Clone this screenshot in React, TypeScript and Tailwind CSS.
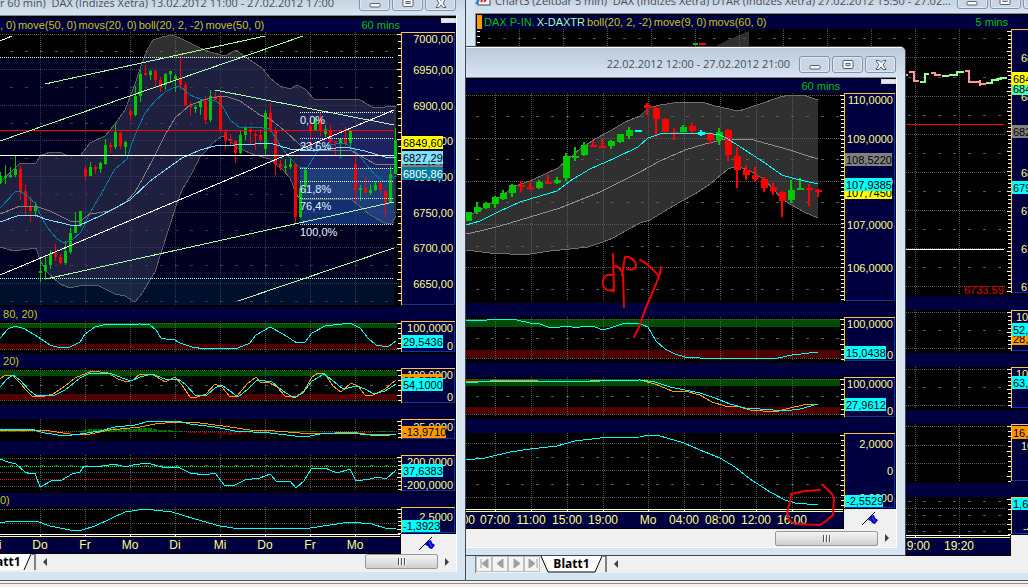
import React from 'react';

type Candle = [x: number, high: number, low: number, top: number, bottom: number, color: 'g' | 'r' | 'c'];

const DAX_CANDLES: Candle[] = [
  [0, 172, 184, 176, 183, 'g'], [5, 165, 184, 176, 178, 'g'], [10, 167, 178, 175, 177, 'g'], [15, 155, 177, 169, 175, 'g'],
  [20, 165, 200, 169, 192, 'r'], [25, 185, 215, 191, 206, 'r'], [30, 196, 222, 206, 211, 'r'], [35, 202, 217, 206, 211, 'g'],
  [40, 258, 282, 271, 273, 'g'], [45, 255, 280, 265, 271, 'g'], [50, 250, 269, 255, 265, 'g'], [55, 244, 261, 253, 257, 'r'],
  [60, 254, 265, 257, 263, 'r'], [65, 241, 265, 251, 263, 'g'], [70, 228, 254, 233, 252, 'g'], [75, 212, 233, 225, 233, 'g'],
  [80, 211, 227, 211, 226, 'g'], [85, 166, 180, 169, 176, 'r'], [90, 162, 176, 167, 176, 'g'], [95, 165, 174, 167, 169, 'r'],
  [100, 162, 173, 163, 169, 'g'], [105, 139, 165, 145, 164, 'g'], [110, 142, 153, 145, 147, 'r'], [115, 124, 149, 132, 147, 'g'],
  [120, 132, 149, 133, 146, 'r'], [125, 141, 155, 142, 147, 'g'], [130, 109, 121, 111, 115, 'r'], [135, 86, 116, 96, 115, 'g'],
  [140, 70, 102, 74, 96, 'g'], [145, 65, 76, 73, 75, 'r'], [150, 70, 80, 71, 75, 'g'], [155, 70, 87, 71, 80, 'r'],
  [160, 77, 92, 80, 87, 'r'], [165, 73, 90, 74, 85, 'g'], [170, 71, 83, 71, 74, 'g'], [175, 74, 92, 76, 79, 'g'],
  [180, 56, 90, 78, 85, 'r'], [185, 82, 106, 85, 105, 'r'], [190, 102, 116, 105, 107, 'r'], [195, 105, 113, 107, 109, 'g'],
  [200, 99, 115, 101, 107, 'g'], [205, 96, 124, 101, 120, 'r'], [210, 90, 122, 96, 120, 'g'], [215, 92, 100, 96, 100, 'r'],
  [220, 95, 132, 96, 131, 'r'], [225, 129, 149, 132, 140, 'r'], [230, 134, 145, 139, 141, 'r'], [235, 141, 163, 141, 153, 'r'],
  [240, 131, 154, 135, 153, 'g'], [245, 126, 140, 128, 135, 'g'], [250, 126, 145, 129, 132, 'r'], [255, 131, 150, 134, 136, 'r'],
  [260, 129, 145, 135, 140, 'r'], [265, 110, 156, 113, 149, 'g'], [270, 103, 133, 113, 130, 'r'], [275, 127, 175, 131, 164, 'r'],
  [280, 160, 170, 164, 167, 'r'], [285, 159, 173, 166, 168, 'g'], [290, 159, 169, 164, 167, 'g'], [295, 163, 223, 164, 217, 'r'],
  [300, 181, 218, 188, 217, 'g'], [305, 168, 194, 170, 186, 'g'], [310, 122, 144, 126, 130, 'r'], [315, 117, 131, 119, 130, 'g'],
  [320, 112, 136, 119, 130, 'r'], [325, 125, 137, 129, 134, 'g'], [330, 125, 145, 130, 142, 'r'], [335, 141, 155, 141, 143, 'r'],
  [340, 138, 158, 139, 144, 'g'], [345, 127, 146, 139, 143, 'r'], [350, 130, 146, 131, 143, 'g'], [355, 150, 202, 164, 190, 'r'],
  [360, 185, 201, 188, 190, 'g'], [365, 177, 193, 188, 193, 'r'], [370, 184, 195, 190, 193, 'g'], [375, 181, 191, 185, 190, 'g'],
  [380, 182, 195, 183, 190, 'r'], [385, 190, 217, 191, 202, 'r'], [390, 166, 202, 174, 202, 'g'], [395, 128, 174, 141, 174, 'g'],
];

const FX_CANDLES: Candle[] = [
  [468, 212, 221, 212, 221, 'g'], [477, 202, 214, 207, 212, 'g'], [486, 202, 209, 203, 208, 'g'], [495, 196, 208, 197, 204, 'g'],
  [503, 190, 200, 193, 199, 'g'], [512, 184, 197, 185, 193, 'g'], [521, 181, 192, 185, 187, 'r'], [530, 181, 190, 187, 189, 'r'],
  [539, 180, 189, 182, 188, 'g'], [548, 175, 184, 182, 184, 'r'], [557, 177, 184, 180, 183, 'g'], [566, 153, 181, 156, 178, 'g'],
  [575, 147, 161, 156, 158, 'g'], [584, 142, 156, 145, 155, 'g'], [593, 141, 147, 145, 147, 'r'], [602, 139, 148, 146, 148, 'r'],
  [611, 140, 149, 141, 146, 'g'], [620, 134, 143, 134, 142, 'g'], [629, 127, 139, 130, 136, 'g'], [638, 130, 132, 130, 132, 'c'],
  [647, 103, 115, 105, 108, 'r'], [656, 107, 137, 108, 119, 'r'], [665, 118, 133, 119, 132, 'r'], [674, 128, 140, 132, 134, 'r'],
  [683, 125, 132, 127, 132, 'g'], [692, 123, 133, 126, 131, 'r'], [701, 130, 136, 132, 135, 'c'], [710, 132, 144, 134, 140, 'r'],
  [719, 128, 145, 132, 140, 'g'], [728, 129, 161, 130, 155, 'r'], [737, 147, 188, 156, 170, 'r'], [746, 165, 180, 170, 175, 'r'],
  [755, 167, 182, 175, 179, 'r'], [764, 177, 192, 179, 188, 'r'], [773, 183, 195, 187, 191, 'r'], [782, 191, 217, 192, 201, 'r'],
  [791, 180, 203, 190, 200, 'g'], [800, 178, 190, 188, 190, 'g'], [809, 184, 206, 188, 190, 'r'], [818, 189, 197, 190, 192, 'r'],
];

const CANDLE_COLORS = { g: '#00c800', r: '#ff0000', c: '#00ffff' };
const CYAN = '#00ffff';
const ORANGE = '#ff9900';

const DAX_X = [40, 85, 130, 175, 220, 265, 310, 355];
const FX_X = [495, 531, 567, 603, 648, 684, 720, 756, 792];
const FIVE_X = [519, 563, 607, 651, 695, 739, 783, 827, 871, 915, 959];

const HISTOGRAM = [
  1, 1, 1, 1, 1, 1, 0, 0, -1, -1, -2, -1, -1, -1, -1, 0, 1, 2, 3, 3, 3, 3, 3, 4, 3, 3, 3, 3, 4, 4, 4, 3, 2, 2, 2, 1, 1,
  0, -1, -1, -1, -2, -1, -1, -2, -2, -3, -2, -2, -1, -1, -1, -1, -1, -1, -1, 1, 1, 1, 1, 1, 1, 1, 1, 0, -1, -1, -2, -1, -1, -1,
  -2, -1, -1, -1, 0, 1, 1, 1,
];

interface ChartProps {
  x: number;
  y: number;
  w: number;
  h: number;
  label: string;
  children: React.ReactNode;
}

const Chart: React.FC<ChartProps> = ({ x, y, w, h, label, children }) => (
  <svg role="img" aria-label={label} viewBox={`${x} ${y} ${w} ${h}`} width={w} height={h} shapeRendering="crispEdges" className="block shrink-0 bg-black">
    {children}
  </svg>
);

interface GridProps {
  xs: number[];
  rows: number[];
  dashes?: number[];
  x0: number;
  x1: number;
  y0: number;
  y1: number;
}

const Grid: React.FC<GridProps> = ({ xs, rows, dashes = [], x0, x1, y0, y1 }) => (
  <g stroke="#585858">
    {xs.map((x) => <line key={x} x1={x + 0.5} x2={x + 0.5} y1={y0} y2={y1} strokeDasharray="1 1" />)}
    {rows.map((y) => <line key={y} x1={x0} x2={x1} y1={y + 0.5} y2={y + 0.5} strokeDasharray="1 1" />)}
    {dashes.map((y) => <line key={y} x1={x0 + 10} x2={x1} y1={y + 0.5} y2={y + 0.5} strokeDasharray="3 12" />)}
  </g>
);

const Line: React.FC<{ points: string; color: string }> = ({ points, color }) => (
  <polyline points={points} fill="none" stroke={color} strokeWidth="1" />
);

const Candles: React.FC<{ data: Candle[]; body: number; wick: number }> = ({ data, body, wick }) => (
  <g>
    {data.map(([x, high, low, top, bottom, c]) => (
      <g key={x} fill={CANDLE_COLORS[c]}>
        <rect x={x - (wick > 1 ? 1 : 0)} y={high} width={wick} height={low - high} />
        <rect x={x - (body - 1) / 2} y={top} width={body} height={bottom - top} />
      </g>
    ))}
  </g>
);

interface AxisProps {
  x: number;
  y: number;
  w: number;
  h: number;
  step?: number;
  labels: [number, string][];
  anchor?: number;
}

const Axis: React.FC<AxisProps> = ({ x, y, w, h, step = 7, labels, anchor }) => {
  const ticks = Array.from({ length: Math.floor((h - 2) / step) + 1 }, (_, i) => y + 2 + i * step);
  return (
    <g>
      {ticks.map((t, i) => <rect key={t} x={x - (i % 5 === 0 ? 4 : 3)} y={t} width={i % 5 === 0 ? 4 : 3} height="1" fill="#fff" />)}
      <rect x={x} y={y} width={w} height={h} fill="#000040" />
      <rect x={x + w - 1} y={y} width="1" height={h} fill="#0030d8" />
      <rect x={x} y={y + h - 1} width={w} height="1" fill="#0030d8" />
      <rect x={x} y={y} width={w} height="1" fill="#ffc830" />
      <rect x={x} y={y} width="1" height={h} fill="#ffc830" />
      {labels.map(([ly, text]) => (
        <text key={ly} x={anchor ?? x + w - 2} y={ly} textAnchor={anchor ? 'start' : 'end'} fill="#ffff80" fontSize="11">{text}</text>
      ))}
    </g>
  );
};

interface TagProps {
  x: number;
  y: number;
  w: number;
  h?: number;
  bg: string;
  fg?: string;
  text: string;
}

const Tag: React.FC<TagProps> = ({ x, y, w, h = 13, bg, fg = '#000', text }) => (
  <g>
    <rect x={x} y={y} width={w} height={h} fill={bg} />
    <text x={x + 1} y={y + h - 2} fill={fg} fontSize="11">{text}</text>
  </g>
);

// overbought / oversold stripes behind the stochastic lines
const Zones: React.FC<{ x: number; w: number; top: [number, number]; bottom: [number, number] }> = ({ x, w, top, bottom }) => (
  <g>
    <rect x={x} y={top[0]} width={w} height={top[1]} fill="#004c00" />
    <rect x={x} y={bottom[0]} width={w} height={bottom[1]} fill="#500000" />
  </g>
);

const TimeAxis: React.FC<{ x: number; y: number; w: number; h: number; end: number; xs: number[]; labels: [number, string][] }> = ({ x, y, w, h, end, xs, labels }) => (
  <Chart x={x} y={y} w={w} h={h} label="Zeitachse">
    <rect x={x} y={y + 3} width={end - x} height={h - 4} fill="#000040" />
    <rect x={x} y={y} width={end - x} height="1" fill="#fff" />
    <rect x={x} y={y + 2} width={end - x} height="1" fill="#ffff80" />
    {xs.map((t) => <rect key={t} x={t} y={y + 1} width="1" height="2" fill="#fff" />)}
    {labels.map(([lx, text]) => (
      <text key={lx} x={lx} y={y + 15} textAnchor="middle" fill="#ffff80" fontSize="12">{text}</text>
    ))}
    <rect x={end + 1} y={y} width={x + w - end} height={h} fill="#f0f0f0" />
    <g shapeRendering="auto" transform={`translate(${end + 19} ${y + 3})`}>
      <path d="M0 13 13 0" stroke="#000" fill="none" />
      <path d="M9 4 12 3 13 6 16 8 13 12 10 11 9 9 6 8z" fill="#0000c0" />
      <path d="M10 5l3 5" stroke="#4060ff" />
    </g>
  </Chart>
);

const Header: React.FC<{ children?: React.ReactNode }> = ({ children }) => (
  <div className="flex h-[14px] shrink-0 items-center justify-between overflow-hidden whitespace-pre bg-[#000040] text-[11px] leading-[14px] text-[#c8c800]">
    {children}
  </div>
);

const Grip: React.FC = () => <span className="h-[5px] w-[15px] self-start border border-gray-300 bg-gray-200" />;

const WindowButtons: React.FC = () => (
  <div className="flex shrink-0 gap-[2px]">
    {['Minimieren', 'Maximieren', 'Schließen'].map((name) => (
      <button key={name} aria-label={name} className="flex h-[17px] w-[31px] items-center justify-center rounded-[3px] border border-[#8494a8] bg-[#c9d6e5] shadow-[inset_0_0_0_1px_#e0e9f3]">
        <svg width="14" height="12" viewBox="0 0 14 12" fill="#fff" stroke="#59616c">
          {name === 'Minimieren' && <rect x="2" y="6.5" width="10" height="3.5" rx="1" />}
          {name === 'Maximieren' && (
            <>
              <rect x="2" y="1.5" width="10" height="8" rx="1" />
              <rect x="5" y="4.5" width="4" height="2" fill="#c9d6e5" />
            </>
          )}
          {name === 'Schließen' && <path d="M2 1.500h3l2 2 2-2h3L9 6l3 4.500H9l-2-2.500-2 2.500H2L5 6z" />}
        </svg>
      </button>
    ))}
  </div>
);

const ScrollThumb: React.FC<{ className: string }> = ({ className }) => (
  <div className={`flex h-[15px] shrink-0 items-center justify-center gap-px rounded-[2px] border border-[#989898] bg-linear-to-b from-[#f4f4f4] to-[#cfcfcf] ${className}`}>
    {[0, 1, 2].map((i) => <span key={i} className="h-[7px] w-[2px] border-l border-[#505050] bg-white" />)}
  </div>
);

const ArrowButton: React.FC<{ dir: 'left' | 'right' }> = ({ dir }) => (
  <button aria-label={dir === 'left' ? 'Zurück' : 'Weiter'} className="flex h-[16px] w-[18px] shrink-0 items-center justify-center">
    <svg width="4" height="8" viewBox="0 0 4 8" fill="#404040">
      <path d={dir === 'left' ? 'M4 0v8L0 4z' : 'M0 0v8l4-4z'} />
    </svg>
  </button>
);

const Splitter: React.FC = () => <span className="h-[16px] w-[4px] border-r-2 border-t border-[#808080] bg-[#f0f0f0]" />;

const DaxWindow: React.FC = () => {
  const bandTop = '0,182 15,168 20,163 36,163 40,156 50,152 60,152 66,155 81,155 90,143 105,136 115,124 125,110 135,84 141,66 147,50 153,40 162,37 172,35 180,38 190,43 200,48 210,52 225,56 236,50 250,60 262,68 270,78 280,86 290,89 297,85 305,89 315,100 335,99 360,100 372,107 385,107 396,106';
  const bandBottom = '396,216 392,223 387,224 370,215 352,200 300,199 296,194 290,178 283,170 270,159 255,155 245,151 236,147 227,138 222,136 213,143 205,152 200,157 192,173 182,190 177,203 162,250 155,272 143,292 135,302 125,296 115,294 97,285 83,285 70,288 60,284 47,272 40,260 36,248 14,251 0,247';
  return (
    <section className="relative z-20 flex w-[466px] shrink-0 flex-col border-r border-[#404850] bg-[#d7e4f1]">
      <header className="flex h-[15px] shrink-0 items-end justify-between overflow-hidden bg-linear-to-b from-[#c6d3e1] to-[#d7e4f1] pr-[9px]">
        <h2 className="mb-[4px] whitespace-pre font-['Open_Sans',sans-serif] text-[11px] leading-[16px] text-[#484f58]">r 60 min)  DAX (Indizes Xetra) 13.02.2012 11:00 - 27.02.2012 17:00</h2>
        <div className="mb-[4px]"><WindowButtons /></div>
      </header>
      <div className="mr-[8px] flex flex-col border-r border-white bg-black">
        <div className="h-[3px] border-t border-[#808890] bg-black" />
        <Header>
          <span className="flex gap-[2px]">
            <span>, 0)</span>
            <span>move(50, 0)</span>
            <span>movs(20, 0)</span>
            <span>boll(20, 2, -2)</span>
            <span>move(50, 0)</span>
          </span>
          <span className="ml-auto mr-[41px] text-[#00c000]">60 mins</span>
          <span className="flex h-full"><Grip /></span>
        </Header>
        <Chart x={0} y={32} w={456} h={275} label="DAX 60 min">
          <polygon points={`${bandTop} ${bandBottom}`} fill="#303030" />
          <Grid xs={DAX_X} rows={[34, 69, 105, 140, 176, 212, 247, 283]} dashes={[51, 87, 123, 158, 194, 230, 265, 301]} x0={0} x1={400} y0={32} y1={305} />
          <rect x="0" y="58" width="394" height="247" fill="#00005c" opacity="0.35" />
          <rect x="0" y="278" width="394" height="27" fill="#003c50" opacity="0.25" />
          <rect x="300" y="112" width="94" height="27" fill="#3030a0" opacity="0.2" />
          <rect x="300" y="139" width="94" height="29" fill="#2028a0" opacity="0.35" />
          <rect x="300" y="168" width="94" height="30" fill="#2050a0" opacity="0.6" />
          <rect x="300" y="198" width="94" height="26" fill="#2058b0" opacity="0.55" />
          <Line points={bandTop} color="#606060" />
          <Line points={bandBottom} color="#606060" />
          <Candles data={DAX_CANDLES} body={3} wick={1} />
          <Line points="0,208 15,192 20,191 27,196 36,204 41,216 47,227 57,239 64,243 72,240 81,232 90,213 105,187 115,169 127,159 130,149 135,135 145,113 155,101 165,92 175,87 180,86 190,95 200,99 215,101 222,105 230,120 240,128 255,127 270,129 280,145 290,158 300,168 308,167 318,150 328,145 345,143 352,148 362,159 375,175 385,182 396,176" color="#007ca0" />
          <Line points="0,214 20,206 35,206 50,211 70,221 80,221 90,214 110,211 125,203 135,192 143,178 155,155 165,135 175,118 190,105 210,98 225,96 240,101 260,115 270,119 285,131 300,145 320,151 350,150 375,164 396,164" color="#808080" />
          <Line points="0,222 20,215 35,215 45,219 70,225 80,225 100,216 130,200 150,181 175,163 182,158 200,150 215,146 235,145 255,144 270,143 290,149 310,151 345,147 365,151 385,157 396,158" color="#80e0ff" />
          <rect x="0" y="130" width="394" height="1" fill="#f00" />
          <rect x="0" y="155" width="394" height="1" fill="#fff" />
          <g stroke="#c8ffff" strokeDasharray="1 1">
            <line x1="0" x2="394" y1="57.500" y2="57.500" />
            <line x1="0" x2="394" y1="278.500" y2="278.500" />
            {[112, 138, 168, 181, 198, 224].map((y) => <line key={y} x1="300" x2="394" y1={y + 0.5} y2={y + 0.5} />)}
          </g>
          <g stroke="#a8ffa8">
            <line x1="45" y1="84" x2="265" y2="36" />
            <line x1="0" y1="141" x2="303" y2="36" />
            <line x1="215" y1="90" x2="394" y2="125" />
            <line x1="46" y1="279" x2="394" y2="202" />
            <line x1="238" y1="301" x2="394" y2="248" />
          </g>
          <g stroke="#fff">
            <line x1="0" y1="41" x2="12" y2="36" />
            <line x1="0" y1="275" x2="394" y2="110" />
          </g>
          <g fill="#e0f4ff" fontSize="11">
            <text x="300" y="124">0,0%</text>
            <text x="300" y="150">23,6%</text>
            <text x="300" y="193">61,8%</text>
            <text x="300" y="210">76,4%</text>
            <text x="300" y="236">100,0%</text>
          </g>
          <Axis x={401} y={32} w={54} h={273} labels={[[43, '7000,00'], [74, '6950,00'], [110, '6900,00'], [145, '6850,00'], [181, '6800,00'], [217, '6750,00'], [252, '6700,00'], [288, '6650,00']]} />
          <Tag x={402} y={154} w={41} bg="#808080" text="6821,34" />
          <Tag x={402} y={136} w={41} bg="#ffff00" text="6849,60" />
          <Tag x={402} y={151} w={41} bg="#80e0ff" text="6827,29" />
          <Tag x={402} y={167} w={41} bg="#007ca0" fg="#fff" text="6805,86" />
        </Chart>

        <Header> 80, 20)</Header>
        <Chart x={0} y={321} w={456} h={33} label="Stochastik 80 20">
          <Zones x={0} w={397} top={[323, 5]} bottom={[344, 5]} />
          <Grid xs={DAX_X} rows={[323, 349]} x0={0} x1={400} y0={321} y1={353} />
          <Line points="0,338 8,329 15,326 25,329 38,337 50,345 60,348 70,347 80,342 85,334 95,327 103,325 140,324 150,325 156,330 161,338 166,339 173,339 180,343 192,347 205,349 215,348 235,349 243,346 250,343 256,335 270,327 283,334 297,343 305,342 312,333 325,326 350,323 360,328 368,338 376,345 388,347 396,341" color={CYAN} />
          <Axis x={401} y={321} w={54} h={31} step={5} labels={[[332, '100,0000'], [350, '0']]} />
          <Tag x={402} y={335} w={41} bg={CYAN} text="29,5436" />
        </Chart>

        <Header> 20)</Header>
        <Chart x={0} y={368} w={456} h={37} label="Stochastik 20">
          <Zones x={0} w={397} top={[371, 5]} bottom={[394, 6]} />
          <Grid xs={DAX_X} rows={[370, 400]} dashes={[385]} x0={0} x1={400} y0={368} y1={402} />
          <Line points="0,379 5,375 12,375 20,383 27,391 32,396 45,396 53,394 65,386 75,378 92,371 108,373 118,379 127,382 133,380 140,374 152,374 165,382 175,377 182,385 190,397 197,397 206,394 215,384 222,387 230,397 237,396 247,384 256,377 260,382 268,382 277,387 285,396 296,397 304,391 312,377 318,373 325,374 333,386 341,392 351,383 358,386 365,395 373,395 385,389 396,380" color={ORANGE} />
          <Line points="0,387 7,379 13,375 20,380 30,391 37,396 55,395 65,390 80,378 90,373 110,373 122,378 131,381 140,377 152,374 160,377 167,380 178,379 185,384 196,396 207,395 215,388 222,385 230,391 238,397 248,389 257,380 272,382 283,391 294,398 303,393 312,381 324,374 332,380 343,389 357,386 365,389 374,394 385,391 396,384" color={CYAN} />
          <Axis x={401} y={368} w={54} h={35} step={5} labels={[[379, '100,0000'], [401, '0']]} />
          <Tag x={402} y={374} w={41} bg={ORANGE} text="60,0756" />
          <Tag x={402} y={378} w={41} bg={CYAN} text="54,1000" />
        </Chart>

        <Header />
        <Chart x={0} y={419} w={456} h={22} label="MACD">
          <Grid xs={DAX_X} rows={[431]} x0={0} x1={400} y0={419} y1={438} />
          {HISTOGRAM.map((v, i) => (
            <rect key={i} x={i * 5 - 2} y={v > 0 ? 432 - v : 432} width="4" height={Math.abs(v)} fill={v > 0 ? '#007800' : '#780000'} />
          ))}
          <Line points="0,431 35,430 50,431 70,434 90,434 110,430 140,427 155,424 175,422 200,423 215,425 230,427 250,430 275,431 300,433 320,434 350,432 365,434 390,435 396,434" color={ORANGE} />
          <Line points="0,430 30,429 45,433 65,436 80,434 100,431 115,427 135,425 150,421 178,421 190,424 215,427 235,431 270,433 295,436 310,436 325,433 350,433 370,435 385,436 396,434" color={CYAN} />
          <Axis x={401} y={419} w={54} h={20} step={4} labels={[[431, '25,0000']]} />
          <Tag x={402} y={426} w={44} h={12} bg={ORANGE} text="-13,9710" />
        </Chart>

        <Header />
        <Chart x={0} y={455} w={456} h={38} label="CCI">
          <Grid xs={DAX_X} rows={[458, 472, 486]} dashes={[465]} x0={0} x1={400} y0={455} y1={490} />
          <line x1="0" x2="397" y1="466.500" y2="466.500" stroke="#00ff00" strokeDasharray="1 1" />
          <line x1="0" x2="397" y1="479.500" y2="479.500" stroke="#d82020" strokeDasharray="1 1" />
          <Line points="0,459 8,462 16,464 25,472 30,474 35,473 40,487 53,480 62,480 72,474 80,472 84,466 97,467 115,464 125,467 133,465 147,463 162,467 180,468 190,473 205,475 215,473 225,486 235,485 245,480 260,478 270,474 277,482 290,481 296,488 304,481 311,469 325,468 337,473 350,469 356,481 370,479 378,477 386,479 396,470" color={CYAN} />
          <Axis x={401} y={455} w={54} h={36} step={4} labels={[[466, '200,0000'], [489, '-200,0000']]} />
          <Tag x={402} y={464} w={41} bg={CYAN} text="37,6383" />
        </Chart>

        <Header>0)</Header>
        <Chart x={0} y={507} w={456} h={27} label="Momentum">
          <Grid xs={DAX_X} rows={[509, 523]} x0={0} x1={400} y0={507} y1={533} />
          <Line points="0,523 10,521 36,521 50,526 70,530 82,530 95,526 110,519 125,512 145,509 172,512 195,519 220,526 240,529 265,528 310,528 330,525 350,522 372,524 385,528 396,528" color={CYAN} />
          <Axis x={401} y={507} w={54} h={26} step={4} labels={[[521, '2,5000']]} />
          <Tag x={402} y={520} w={38} h={12} bg={CYAN} text="-1,3923" />
        </Chart>
        <TimeAxis x={0} y={534} w={456} h={20} end={400} xs={DAX_X} labels={[[0, 'i'], [40, 'Do'], [85, 'Fr'], [130, 'Mo'], [175, 'Di'], [220, 'Mi'], [265, 'Do'], [310, 'Fr'], [355, 'Mo']]} />

        <div className="flex h-[18px] items-start bg-[#f0f0f0]">
          <div className="relative flex h-[17px] w-[32px]">
            <svg width="32" height="17" className="absolute inset-0">
              <path d="M0 0H31L24 16H0z" fill="#fff" />
              <path d="M31 0 24 16" stroke="#000" />
            </svg>
            <button className="relative -ml-[4px] h-[16px] font-['Open_Sans',sans-serif] text-[12px] font-bold leading-[16px] text-black">att1</button>
          </div>
          <Splitter />
          <ArrowButton dir="left" />
          <div className="flex-1" />
          <ScrollThumb className="w-[73px]" />
          <ArrowButton dir="right" />
        </div>
      </div>
    </section>
  );
};

const FxWindow: React.FC = () => {
  const bandTop = '466,217 480,210 493,202 515,186 530,181 545,174 558,168 567,160 580,149 595,139 610,131 625,122 640,116 648,108 660,105 680,102 702,102 715,106 738,111 745,109 760,104 780,97 790,95 803,95 818,100';
  const bandBottom = '818,218 804,212 790,204 782,199 765,180 752,172 737,166 728,169 710,184 695,194 680,202 665,211 650,220 640,223 627,230 613,238 603,242 588,247 570,249 550,251 530,254 510,254 490,253 466,250';
  return (
    <section className="absolute left-[465px] top-[46px] z-10 flex w-[441px] flex-col overflow-hidden rounded-tr-[6px] border border-[#404850] bg-[#d7e4f1]">
      <header className="flex h-[30px] items-center justify-end gap-[9px] border-t border-white bg-linear-to-b from-[#bccad9] to-[#d7e4f1] pr-[9px] pt-[4px]">
        <h2 className="whitespace-pre font-['Open_Sans',sans-serif] text-[11px] text-[#484f58]">22.02.2012 12:00 - 27.02.2012 21:00</h2>
        <WindowButtons />
      </header>
      <div className="mr-[8px] flex flex-col border-r border-white bg-black">
        <div className="h-[2px] border-t border-[#808890] bg-black" />
        <Header>
          <span className="ml-auto mr-[41px] text-[#00c000]">60 mins</span>
          <span className="flex h-full"><Grip /></span>
        </Header>
        <Chart x={466} y={93} w={430} h={210} label="60 min">
          <polygon points={`${bandTop} ${bandBottom}`} fill="#303030" />
          <Grid xs={FX_X} rows={[95, 138, 181, 224, 267]} dashes={[116, 159, 202, 246, 289]} x0={466} x1={843} y0={93} y1={300} />
          <Line points={bandTop} color="#707070" />
          <Line points={bandBottom} color="#707070" />
          <Line points="466,234 480,231 500,226 530,217 560,208 580,200 600,192 620,182 640,172 660,161 685,150 705,144 725,139 750,139 768,144 790,150 805,155 818,159" color="#909090" />
          <Candles data={FX_CANDLES} body={7} wick={2} />
          <Line points="466,225 480,221 500,211 520,202 540,196 557,191 570,181 590,169 615,158 638,147 648,138 660,134 685,133 705,133 720,135 728,139 745,150 765,163 782,175 792,178 818,184" color={CYAN} />
          <Axis x={844} y={93} w={51} h={208} step={4} labels={[[104, '110,0000'], [143, '109,0000'], [186, '108,0000'], [229, '107,0000'], [272, '106,0000']]} />
          <Tag x={845} y={153} w={47} bg="#808080" text="108,5220" />
          <Tag x={845} y={186} w={47} bg="#ffff00" text="107,7450" />
          <Tag x={845} y={178} w={47} bg={CYAN} text="107,9385" />
        </Chart>

        <Header />
        <Chart x={466} y={317} w={430} h={46} label="Stochastik">
          <Zones x={466} w={374} top={[319, 8]} bottom={[350, 8]} />
          <Grid xs={FX_X} rows={[319, 358]} dashes={[338]} x0={466} x1={843} y0={317} y1={360} />
          <Line points="466,320 480,321 495,319 517,320 530,323 540,324 548,327 560,327 568,326 576,328 585,326 595,327 603,330 613,327 622,324 638,323 648,327 656,341 665,349 675,354 685,357 700,358 778,358 792,355 818,352" color={CYAN} />
          <Axis x={844} y={317} w={51} h={44} step={5} labels={[[328, '100,0000'], [359, '0']]} />
          <Tag x={845} y={346} w={41} bg={CYAN} text="15,0438" />
        </Chart>

        <Header />
        <Chart x={466} y={377} w={430} h={42} label="Stochastik langsam">
          <Zones x={466} w={374} top={[379, 7]} bottom={[407, 7]} />
          <Grid xs={FX_X} rows={[379, 414]} dashes={[396]} x0={466} x1={843} y0={377} y1={416} />
          <Line points="466,382 515,380 560,382 640,380 655,384 672,391 685,391 700,395 712,402 725,406 740,407 750,410 775,412 790,408 803,405 818,404" color={ORANGE} />
          <Line points="466,383 490,381 520,381 540,382 640,380 655,382 670,387 685,390 700,393 715,398 730,404 745,408 760,409 785,411 800,409 818,404" color={CYAN} />
          <Axis x={844} y={377} w={51} h={40} step={5} labels={[[388, '100,0000'], [415, '0']]} />
          <Tag x={845} y={398} w={41} bg={CYAN} text="27,9612" />
        </Chart>

        <Header />
        <Chart x={466} y={433} w={430} h={76} label="Momentum">
          <Grid xs={FX_X} rows={[443, 470, 497]} dashes={[457, 484]} x0={466} x1={843} y0={433} y1={508} />
          <Line points="466,460 485,458 510,452 530,449 557,446 575,441 600,438 640,437 648,435 660,436 684,443 700,450 720,458 735,467 750,479 770,492 785,500 795,503 818,505" color={CYAN} />
          <Axis x={844} y={433} w={51} h={75} step={5} labels={[[448, '2,0000'], [475, '0'], [502, '-2,0000']]} />
          <Tag x={845} y={495} w={38} h={12} bg={CYAN} text="-2,5529" />
        </Chart>
        <TimeAxis x={466} y={509} w={430} h={20} end={843} xs={FX_X} labels={[[460, '03:00'], [495, '07:00'], [531, '11:00'], [567, '15:00'], [603, '19:00'], [648, 'Mo'], [684, '04:00'], [720, '08:00'], [756, '12:00'], [792, '16:00']]} />

        <div className="flex h-[19px] items-center justify-end border-b border-white bg-[#f0f0f0]">
          <ScrollThumb className="w-[103px]" />
          <ArrowButton dir="right" />
        </div>
      </div>
      <div className="h-[7px]" />
      {/* hand-drawn marks on top of the indicator panes */}
      <svg viewBox="466 47 439 508" width="439" height="508" className="pointer-events-none absolute inset-0" fill="none" stroke="#f00000" strokeWidth="2" strokeLinecap="round" strokeLinejoin="round">
        <path d="M613 254 614 291 607 290C602 287 603 284 603 281 604 275 608 274 612 275" />
        <path d="M615 266C620 267 622 271 623 275L624 307M622 275 625 257C630 256 636 261 636 265 636 270 631 270 627 269" />
        <path d="M640 260C648 263 651 268 659 276M661 267C661 273 659 276 656 284L645 310 639 327 634 337" />
        <path d="M820 490 805 491 791 494 790 502 787 513 789 520 795 524 820 525 826 521 833 515 834 499 832 494 823 485" />
      </svg>
    </section>
  );
};

const FiveMinWindow: React.FC = () => (
  <section className="flex min-w-0 flex-1 flex-col overflow-hidden bg-[#d7e4f1] pl-[9px]">
    <header className="flex h-[13px] shrink-0 items-end gap-[4px] overflow-hidden bg-linear-to-b from-[#c6d3e1] to-[#d7e4f1]">
      <svg width="16" height="16" viewBox="0 0 16 16" className="mb-[7px] shrink-0">
        <rect x="3" y="2" width="12" height="13" fill="#fff" stroke="#404040" />
        <path d="M1 14 5 8" stroke="#1080e0" strokeWidth="2" />
        <path d="M6 12 8 8M9 12l3-4" stroke="#e02020" strokeWidth="2" />
      </svg>
      <h2 className="mb-[4px] whitespace-pre font-['Open_Sans',sans-serif] text-[11px] leading-[16px] text-[#484f58]">Chart3 (Zeitbar 5 min)  DAX (Indizes Xetra) DTAR (Indizes Xetra) 27.02.2012 15:50 - 27.02...</h2>
      <div className="mb-[4px] ml-[2px]"><WindowButtons /></div>
    </header>
    <div className="flex flex-col border-l border-[#808890] bg-black">
      <div className="h-[2px] border-t border-[#808890] bg-black" />
      <div className="ml-px flex h-[14px] items-center gap-[2px] overflow-hidden whitespace-pre bg-[#000040] text-[11px] leading-[14px] text-[#c8c800]">
        <span className="h-[14px] w-[5px] bg-[#ff9900]" />
        <span className="text-[#00c000]">DAX P-IN.</span>
        <span className="text-[#a8ffa8]">X-DAXTR</span>
        <span>boll(20, 2, -2)</span>
        <span>move(9, 0)</span>
        <span>movs(60, 0)</span>
        <span className="ml-auto mr-[20px] text-[#00c000]">5 mins</span>
      </div>
      <Chart x={476} y={29} w={552} h={267} label="DAX 5 min">
        <polygon points="714,47 730,39 749,31 749,47" fill="#303030" />
        <Grid xs={FIVE_X} rows={[57, 96, 134, 172, 210, 248, 286]} dashes={[38, 77, 115, 153, 191, 229, 267]} x0={478} x1={1006} y0={29} y1={294} />
        {[31, 36, 42].map((y) => <rect key={y} x="477" y={y} width="3" height="1" fill="#fff" />)}
        <path d="M693 43h5v2h-5z" fill="#00c800" />
        <path d="M699 43h7v2h-7z" fill="#f00" />
        <g fill="none" strokeWidth="2">
          <path d="M904 75h4M909 72h5v9h5M931 73h4v2h6M965 71h4v11h6M975 82h5v4M980 80v4h6" stroke="#ff9898" />
          <path d="M920 82h5v-8h4M942 76h7M949 75h8v-3h7M986 83h6v-3h7M996 79h5v-1h6" stroke="#98ff98" />
        </g>
        <rect x="905" y="124" width="99" height="1" fill="#f00" />
        <rect x="905" y="249" width="99" height="1" fill="#fff" />
        <text x="964" y="294" fill="#e00000" fontSize="11">6733.59</text>
        <Axis x={1011} y={29} w={60} h={264} step={4} anchor={1021} labels={[[62, '6860,00'], [101, '6840,00'], [177, '6800,00'], [215, '6780,00'], [253, '6760,00'], [291, '6740,00']]} />
        <Tag x={1012} y={83} w={40} h={12} bg="#48ffb8" text="6844,10" />
        <Tag x={1012} y={72} w={40} bg="#ffff00" text="6849,60" />
        <Tag x={1012} y={125} w={40} bg="#808080" text="6822,50" />
        <Tag x={1012} y={181} w={40} bg={CYAN} text="6795,20" />
      </Chart>
      <Header />
      <Chart x={476} y={310} w={552} h={43} label="Stochastik 5 min">
        <Grid xs={FIVE_X} rows={[312, 348]} dashes={[330]} x0={478} x1={1006} y0={310} y1={351} />
        <Axis x={1011} y={310} w={60} h={41} step={4} anchor={1016} labels={[[321, '100,0000']]} />
        <Tag x={1012} y={333} w={41} h={12} bg={ORANGE} text="28,4120" />
        <Tag x={1012} y={323} w={41} bg={CYAN} text="52,3310" />
      </Chart>
      <Header />
      <Chart x={476} y={367} w={552} h={43} label="Stochastik langsam 5 min">
        <Grid xs={FIVE_X} rows={[369, 405]} dashes={[387]} x0={478} x1={1006} y0={367} y1={408} />
        <Axis x={1011} y={367} w={60} h={41} step={4} anchor={1016} labels={[[378, '100,0000']]} />
        <Tag x={1012} y={376} w={41} bg={CYAN} text="63,1180" />
      </Chart>
      <Header />
      <Chart x={476} y={424} w={552} h={59} label="MACD 5 min">
        <Grid xs={FIVE_X} rows={[426, 445, 463]} x0={478} x1={1006} y0={424} y1={481} />
        <Axis x={1011} y={424} w={60} h={57} step={5} anchor={1021} labels={[[450, '10,0000']]} />
        <Tag x={1012} y={426} w={41} bg={ORANGE} text="16,2040" />
      </Chart>
      <Header />
      <Chart x={476} y={497} w={552} h={38} label="Momentum 5 min">
        <Grid xs={FIVE_X} rows={[508, 524]} dashes={[501, 515, 531]} x0={478} x1={1006} y0={497} y1={535} />
        <Axis x={1011} y={497} w={60} h={37} step={5} anchor={1023} labels={[[532, '-4,0000']]} />
        <Tag x={1012} y={498} w={41} h={12} bg={CYAN} text="1,6020" />
      </Chart>
      <TimeAxis x={476} y={535} w={552} h={21} end={1010} xs={FIVE_X} labels={[[915, '19:00'], [959, '19:20']]} />
    </div>
    <div className="flex h-[17px] items-start border-l border-[#808890] bg-[#f0f0f0]">
      {['M4 2v9M11 2v9L5 6.500z', 'M10 2v9L4 6.500z', 'M5 2v9l6-4.500z', 'M4 2v9l6-4.500zM12 2v9'].map((d) => (
        <button key={d} aria-label="Blatt wechseln" className="h-[16px] w-[16px] border border-[#c0c0c0] bg-[#f4f4f4]">
          <svg width="14" height="14" viewBox="0 0 14 14" fill="#a0a0a0" stroke="#a0a0a0"><path d={d} /></svg>
        </button>
      ))}
      <div className="relative flex h-[17px] w-[63px] justify-center">
        <svg width="63" height="17" className="absolute inset-0">
          <path d="M1 0 8 16H55L62 0z" fill="#fff" />
          <path d="M1 0 8 16H55L62 0" stroke="#000" fill="none" />
        </svg>
        <button className="relative h-[15px] font-['Open_Sans',sans-serif] text-[12px] font-bold leading-[15px] text-black">Blatt1</button>
      </div>
      <Splitter />
      <ArrowButton dir="left" />
    </div>
  </section>
);

const App: React.FC = () => (
  <main className="relative flex h-screen flex-col overflow-hidden bg-[#f3eff1] font-['Liberation_Sans',Arial,sans-serif]">
    <div className="flex min-h-0 flex-1 overflow-hidden">
      <DaxWindow />
      <FiveMinWindow />
    </div>
    <FxWindow />
    <footer className="h-[7px] shrink-0 border-t border-[#505860] pt-[2px]">
      <div className="h-px bg-[#909090]" />
    </footer>
  </main>
);

export default App;
